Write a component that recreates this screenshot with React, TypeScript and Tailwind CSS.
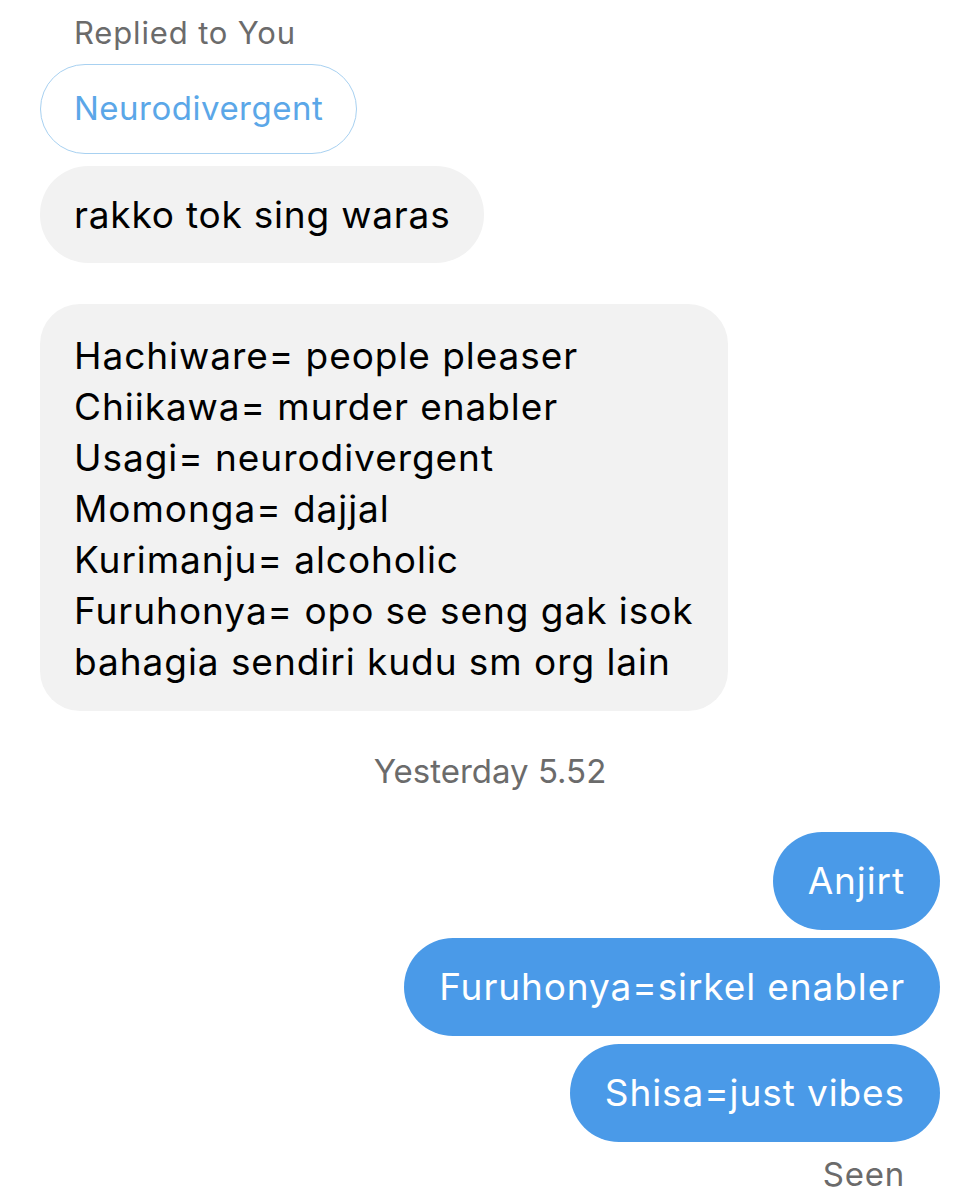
import React from "react";

const font = { fontFamily: "Inter, 'Noto Sans', sans-serif" };

export default function App() {
  const lines = [
    "Hachiware= people pleaser",
    "Chiikawa= murder enabler",
    "Usagi= neurodivergent",
    "Momonga= dajjal",
    "Kurimanju= alcoholic",
    "Furuhonya= opo se seng gak isok",
    "bahagia sendiri kudu sm org lain",
  ];
  return (
    <div className="w-[980px] h-[1199px] bg-white overflow-hidden" style={font}>
      <div className="flex flex-col pl-[40px] pr-[40px]">
        <div className="pl-[34px] pt-[14px] text-[31px] leading-[38px] text-[#6b6b6b] tracking-[0.85px]">
          Replied to You
        </div>
        <div className="mt-[12px] self-start h-[90px] flex items-center px-[33px] rounded-full border-[1.5px] border-[#a8d1f1] text-[#5ba7e8] text-[33px] tracking-[0.5px]">
          Neurodivergent
        </div>
        <div className="mt-[12px] self-start h-[97px] flex items-center px-[34px] rounded-[48px] bg-[#f2f2f2] text-black text-[37px] tracking-[0.8px]">
          rakko tok sing waras
        </div>
        <div className="mt-[41px] self-start w-[688px] h-[407px] flex flex-col justify-center pt-[2px] px-[34px] rounded-[40px] bg-[#f2f2f2] text-black text-[37px] leading-[51px] tracking-[0.95px]">
          {lines.map((l) => (
            <div key={l} className="whitespace-nowrap">{l}</div>
          ))}
        </div>
        <div className="mt-[43px] text-center text-[33px] leading-[34px] text-[#6b6b6b] tracking-[0px]">
          Yesterday 5.52
        </div>
        <div className="mt-[44px] flex flex-col items-end gap-[8px]">
          <div className="h-[98px] shrink-0 flex items-center px-[35px] rounded-full bg-[#4a9ae8] text-white text-[37px] tracking-[0.9px]">
            Anjirt
          </div>
          <div className="h-[98px] shrink-0 flex items-center px-[35px] rounded-full bg-[#4a9ae8] text-white text-[37px] tracking-[0.9px]">
            Furuhonya=sirkel enabler
          </div>
          <div className="h-[98px] shrink-0 flex items-center px-[35px] rounded-full bg-[#4a9ae8] text-white text-[37px] tracking-[0.9px]">
            Shisa=just vibes
          </div>
        </div>
        <div className="mt-[14px] self-end pr-[35px] text-[33px] leading-[36px] text-[#6b6b6b] tracking-[0.75px]">
          Seen
        </div>
      </div>
    </div>
  );
}
